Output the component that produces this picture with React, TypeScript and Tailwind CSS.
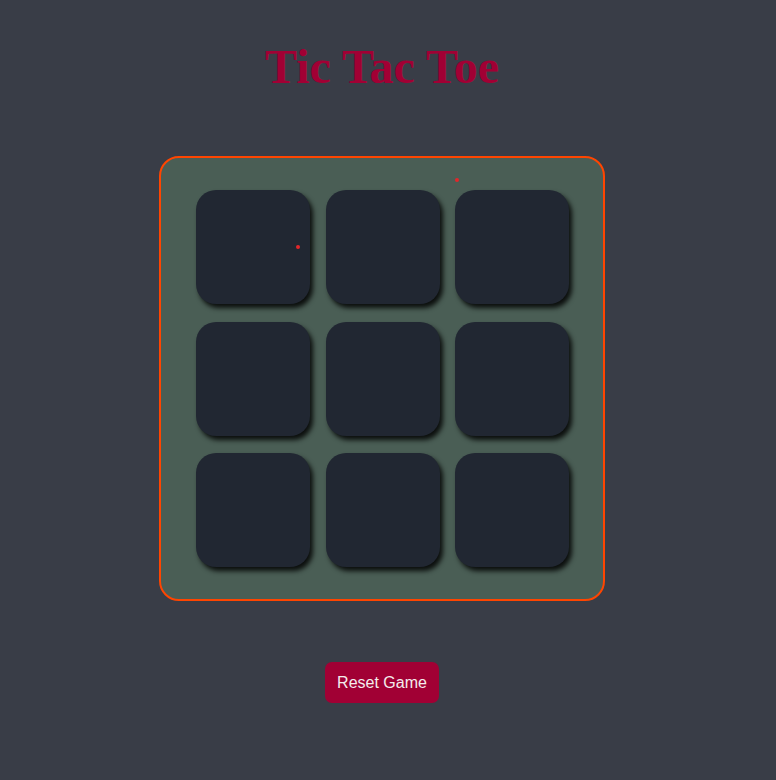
export default function App() {
  const cells = Array.from({ length: 9 }, (_, i) => i);

  return (
    <div className="min-h-[780px] w-full bg-[#393d47]">
      <div className="flex w-[764px] flex-col items-center pt-[40px]">
        <h1 className="font-['Liberation_Serif',serif] text-[48px] font-bold leading-[53px] text-[#a10034]">
          Tic Tac Toe
        </h1>

        <div className="relative mt-[63px] h-[445px] w-[446px] rounded-[20px] border-2 border-[#ff4500] bg-[#4a5e55] pt-[32px] pl-[35px]">
          <div className="grid grid-cols-[114px_114px_114px] grid-rows-[114px_114px_114px] gap-x-[15.5px] gap-y-[17.5px]">
            {cells.map((c) => (
              <button
                key={c}
                className="h-[114px] w-[114px] rounded-[20px] bg-[#212732] shadow-[3px_4px_5px_rgba(0,0,0,0.85)]"
              ></button>
            ))}
          </div>
          <span className="absolute top-[20px] left-[294px] h-[4px] w-[4px] rounded-full bg-[#e3262a]"></span>
          <span className="absolute top-[87px] left-[135px] h-[4px] w-[4px] rounded-full bg-[#e3262a]"></span>
        </div>

        <button className="mt-[61px] h-[41px] w-[114px] rounded-[7px] bg-[#a10034] font-['Liberation_Sans',Arial,sans-serif] text-[16px] text-[#f4ecec]">
          Reset Game
        </button>
      </div>
    </div>
  );
}
